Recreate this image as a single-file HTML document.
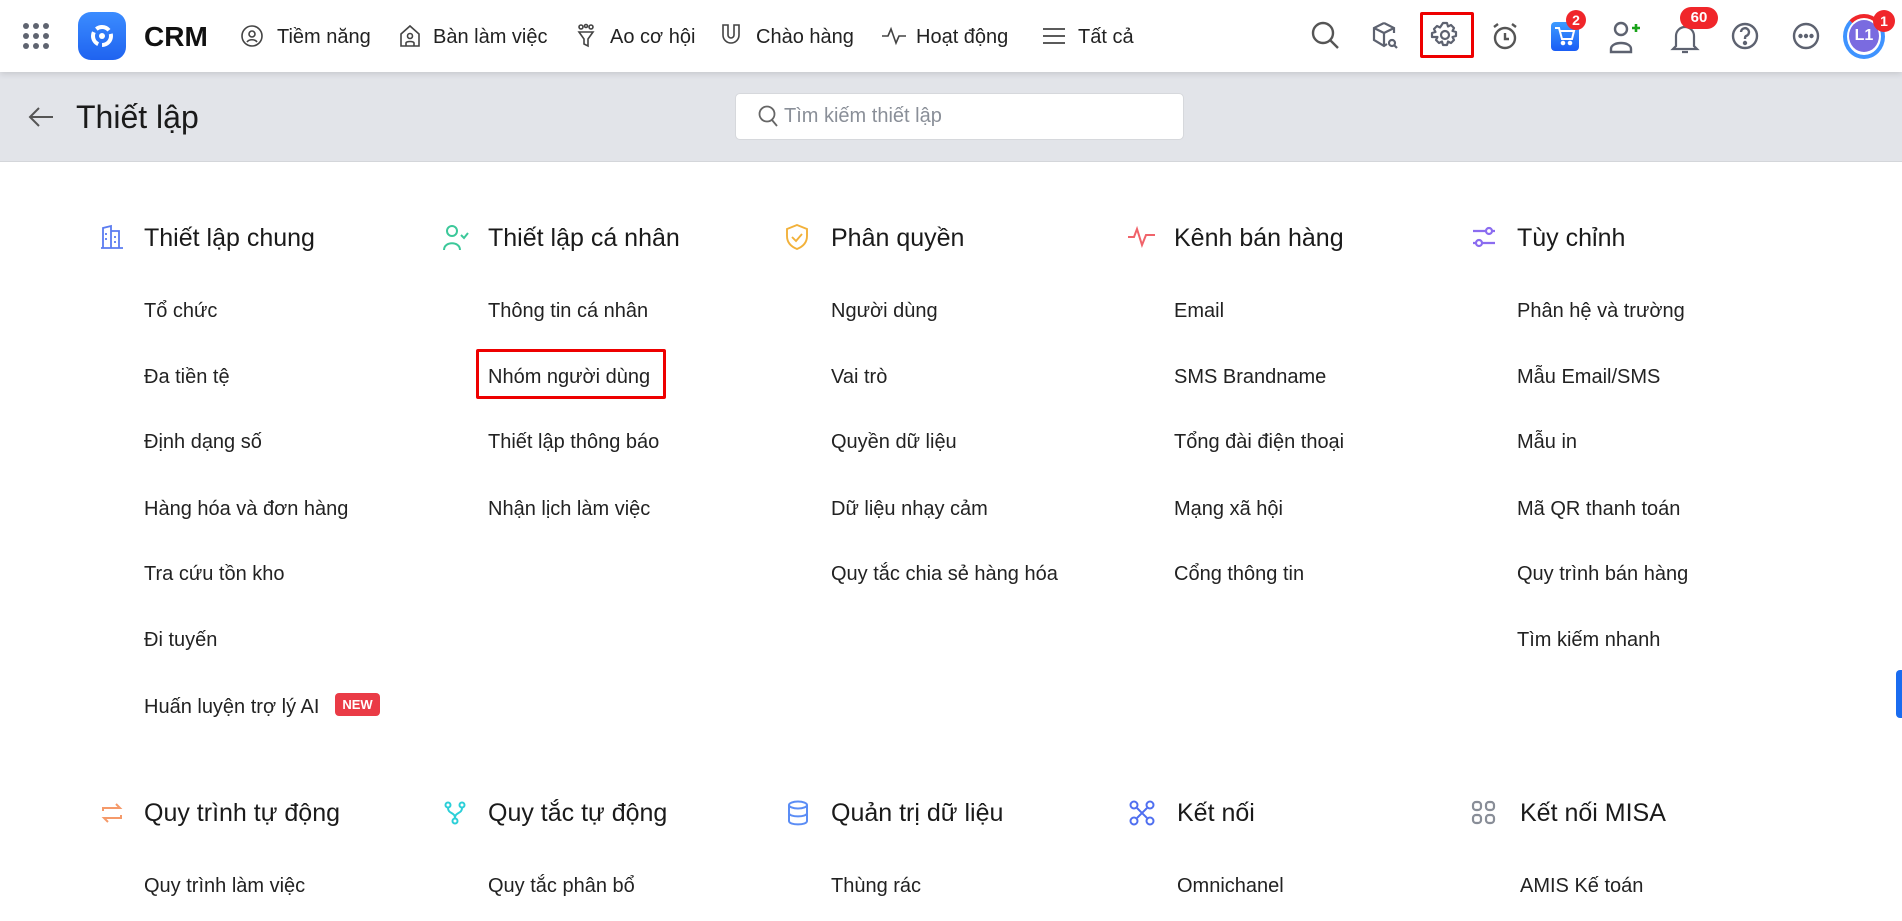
<!DOCTYPE html>
<html><head><meta charset="utf-8"><style>
*{margin:0;padding:0;box-sizing:border-box}
body{width:1902px;height:921px;overflow:hidden;background:#fff;font-family:"Liberation Sans","Noto Sans CJK SC",sans-serif;color:#1f1f1f;position:relative}
.a{position:absolute}
.t{position:absolute;line-height:30px;white-space:nowrap}
.nav{font-size:20px;color:#222}
.h{font-size:25px;color:#1a1a1a}
.i{font-size:20px;color:#222}
svg{position:absolute;overflow:visible}
</style></head><body>
<div class="a" style="left:0;top:0;width:1902px;height:72px;background:#fff;box-shadow:0 2px 6px rgba(0,0,0,.12);z-index:2"></div>
<div class="a" style="left:0;top:72px;width:1902px;height:90px;background:#e2e4e9;border-bottom:1px solid #d4d6da"></div>
<div style="position:absolute;left:0;top:0;z-index:3;width:1902px;height:72px">
<svg style="left:22px;top:22px" width="28" height="28"><g fill="#5f6470"><circle cx="4" cy="4" r="3"/><circle cx="14" cy="4" r="3"/><circle cx="24" cy="4" r="3"/><circle cx="4" cy="14" r="3"/><circle cx="14" cy="14" r="3"/><circle cx="24" cy="14" r="3"/><circle cx="4" cy="24" r="3"/><circle cx="14" cy="24" r="3"/><circle cx="24" cy="24" r="3"/></g></svg>
<div class="a" style="left:78px;top:12px;width:48px;height:48px;border-radius:13px;background:linear-gradient(#3b8cff,#1f63f0)"></div>
<svg style="left:90px;top:24px" width="24" height="24"><circle cx="12" cy="12" r="9" fill="none" stroke="#fff" stroke-width="4" stroke-dasharray="14 4"/><circle cx="12" cy="12" r="3" fill="#fff"/></svg>
<div class="t" style="left:144px;top:22px;font-size:28px;font-weight:bold;color:#111">CRM</div>
<svg style="left:241px;top:25px" width="22" height="22" fill="none" stroke="#444" stroke-width="1.6"><circle cx="11" cy="11" r="10"/><circle cx="11" cy="9" r="3"/><path d="M6 17c2-3 8-3 10 0"/></svg>
<div class="t nav" style="left:277px;top:22px">Tiềm năng</div>
<svg style="left:399px;top:24px" width="22" height="24" fill="none" stroke="#444" stroke-width="1.6"><path d="M2 10 11 2l9 8v12H2z"/><circle cx="11" cy="12" r="2.5"/><path d="M7 22v-3c0-2 8-2 8 0v3"/></svg>
<div class="t nav" style="left:433px;top:22px">Bàn làm việc</div>
<svg style="left:576px;top:24px" width="20" height="24" fill="none" stroke="#444" stroke-width="1.6"><circle cx="5" cy="3" r="2"/><circle cx="10" cy="2" r="1.5"/><circle cx="15" cy="3" r="2"/><path d="M3 8h14l-5 7v7l-4-2v-5z"/></svg>
<div class="t nav" style="left:610px;top:22px">Ao cơ hội</div>
<svg style="left:720px;top:23px" width="22" height="24" fill="none" stroke="#444" stroke-width="1.6"><path d="M3 2v10a8 8 0 0 0 16 0V2h-5v10a3 3 0 0 1-6 0V2z"/></svg>
<div class="t nav" style="left:756px;top:22px">Chào hàng</div>
<svg style="left:882px;top:27px" width="24" height="18" fill="none" stroke="#444" stroke-width="1.6"><path d="M0 9h6l3-7 5 14 3-7h7"/></svg>
<div class="t nav" style="left:916px;top:22px">Hoạt động</div>
<svg style="left:1043px;top:28px" width="22" height="16" stroke="#444" stroke-width="1.8"><path d="M0 1h22M0 8h22M0 15h22"/></svg>
<div class="t nav" style="left:1078px;top:22px">Tất cả</div>

<svg style="left:1311px;top:21px" width="30" height="30" fill="none" stroke="#555" stroke-width="2.4"><circle cx="12" cy="12" r="10"/><path d="M19 19l8 8"/></svg>
<svg style="left:1371px;top:21px" width="28" height="30" fill="none" stroke="#5d6270" stroke-width="2.2"><path d="M13 2 3 7v12l10 6 3-2M13 2l10 5v5M3 7l10 5 10-5M13 12v12"/><circle cx="21" cy="22" r="3"/><path d="M23 24l3 3"/></svg>
<div class="a" style="left:1420px;top:12px;width:54px;height:46px;border:3px solid #e00;border-radius:2px"></div>
<svg style="left:1431px;top:21px" width="28" height="30" fill="none" stroke="#5d6270" stroke-width="2.2" stroke-linejoin="round"><path d="M12 2h4l1 3.5 3-1.5 3 3-1.5 3 3.5 1v4l-3.5 1 1.5 3-3 3-3-1.5-1 3.5h-4l-1-3.5-3 1.5-3-3 1.5-3L1 16v-4l3.5-1L3 8l3-3 3 1.5z"/><circle cx="14" cy="14" r="4"/></svg>
<svg style="left:1491px;top:22px" width="28" height="30" fill="none" stroke="#555" stroke-width="2.4"><circle cx="14" cy="16" r="10"/><path d="M14 11v6h4M3 5l4-3M25 5l-4-3"/></svg>
<div class="a" style="left:1551px;top:22px;width:28px;height:29px;border-radius:4px;background:linear-gradient(#3d9bff,#1a5df5)"></div>
<svg style="left:1553px;top:26px" width="24" height="22" fill="none" stroke="#fff" stroke-width="2"><path d="M2 2h4l3 11h10l2-8H7"/><circle cx="10" cy="17" r="1.3" fill="#fff"/><circle cx="17" cy="17" r="1.3" fill="#fff"/></svg>
<div class="a" style="left:1566px;top:10px;width:20px;height:20px;border-radius:50%;background:#f0262a;color:#fff;font-weight:bold;font-size:14px;text-align:center;line-height:20px">2</div>
<svg style="left:1609px;top:20px" width="34" height="34" fill="none" stroke="#5d6270" stroke-width="2.4"><circle cx="12" cy="9" r="6"/><path d="M2 32v-3c0-8 20-8 20 0v3z"/><path d="M27 4v8M23 8h8" stroke="#1aa31a" stroke-width="2.6"/></svg>
<svg style="left:1671px;top:24px" width="28" height="32" fill="none" stroke="#5d6270" stroke-width="2.2"><path d="M5 22V12a9 9 0 0 1 18 0v10l3 3H2z M11 28h6"/></svg>
<div class="a" style="left:1680px;top:7px;width:38px;height:22px;border-radius:11px;background:#f0262a;color:#fff;font-weight:bold;font-size:15px;text-align:center;line-height:22px">60</div>
<svg style="left:1731px;top:21px" width="30" height="30" fill="none" stroke="#5d6270" stroke-width="2.4"><circle cx="14" cy="15" r="12"/><path d="M10 11a4 4 0 1 1 5 4c-1 .5-1 1.5-1 3"/><circle cx="14" cy="22" r="1" fill="#5d6270"/></svg>
<svg style="left:1791px;top:21px" width="30" height="30" fill="none" stroke="#5d6270" stroke-width="2.4"><circle cx="15" cy="15" r="12"/><circle cx="9.5" cy="15" r="1" fill="#5d6270"/><circle cx="15" cy="15" r="1" fill="#5d6270"/><circle cx="20.5" cy="15" r="1" fill="#5d6270"/></svg>
<div class="a" style="left:1843px;top:14px;width:42px;height:45px;border-radius:50%;border:4px solid #3e93ff;border-top-color:#f0262a;border-left-color:#3e93ff"></div>
<div class="a" style="left:1849px;top:20px;width:30px;height:32px;border-radius:50%;background:#7a6be0;color:#fff;font-weight:bold;font-size:16px;text-align:center;line-height:32px">L1</div>
<div class="a" style="left:1873px;top:10px;width:22px;height:22px;border-radius:50%;background:#f0262a;color:#fff;font-weight:bold;font-size:14px;text-align:center;line-height:22px">1</div>
</div>

<svg style="left:28px;top:106px" width="26" height="22" fill="none" stroke="#555" stroke-width="2"><path d="M25 11H2M11 2 2 11l9 9"/></svg>
<div class="t" style="left:76px;top:101px;font-size:32px;line-height:32px;color:#1a1a1a">Thiết lập</div>
<div class="a" style="left:735px;top:93px;width:449px;height:47px;background:#fff;border:1px solid #d6d8dc;border-radius:5px"></div>
<svg style="left:758px;top:105px" width="22" height="24" fill="none" stroke="#666" stroke-width="1.8"><circle cx="9" cy="9" r="7.5"/><path d="M14 15l5 6"/></svg>
<div class="t" style="left:784px;top:101px;font-size:20px;color:#8a8f98">Tìm kiếm thiết lập</div>

<svg style="left:100px;top:225px" width="24" height="24" fill="none" stroke="#5b7cf0" stroke-width="1.8"><path d="M1 23h22M3 23V3l8-2v22M11 6h8v17M6 8v2M6 13v2M15 11v2M15 16v2"/></svg>
<svg style="left:443px;top:225px" width="26" height="26" fill="none" stroke="#3cc89a" stroke-width="2"><circle cx="9" cy="6" r="5"/><path d="M1 25c0-9 16-9 16 0M18 10l3 3 4-5"/></svg>
<svg style="left:785px;top:224px" width="24" height="26" fill="none" stroke="#f2b13a" stroke-width="1.9"><path d="M12 1 2 5v7c0 7 5 11 10 13 5-2 10-6 10-13V5z"/><path d="M7 13l4 4 6-7"/></svg>
<svg style="left:1128px;top:227px" width="28" height="20" fill="none" stroke="#f0636a" stroke-width="2"><path d="M0 10h6l3-8 5 16 4-10h9"/></svg>
<svg style="left:1472px;top:225px" width="24" height="24" fill="none" stroke="#8b6cf0" stroke-width="2.2"><path d="M1 6h14M20 6h3M1 18h4M10 18h13"/><circle cx="17" cy="6" r="3"/><circle cx="7" cy="18" r="3"/></svg>
<div class="t h" style="left:144px;top:223px">Thiết lập chung</div>
<div class="t h" style="left:488px;top:223px">Thiết lập cá nhân</div>
<div class="t h" style="left:831px;top:223px">Phân quyền</div>
<div class="t h" style="left:1174px;top:223px">Kênh bán hàng</div>
<div class="t h" style="left:1517px;top:223px">Tùy chỉnh</div>

<div class="t i" style="left:144px;top:296px">Tổ chức</div>
<div class="t i" style="left:144px;top:362px">Đa tiền tệ</div>
<div class="t i" style="left:144px;top:427px">Định dạng số</div>
<div class="t i" style="left:144px;top:494px">Hàng hóa và đơn hàng</div>
<div class="t i" style="left:144px;top:559px">Tra cứu tồn kho</div>
<div class="t i" style="left:144px;top:625px">Đi tuyến</div>
<div class="t i" style="left:144px;top:692px">Huấn luyện trợ lý AI</div>
<div class="a" style="left:335px;top:693px;width:45px;height:23px;background:#ea3b46;border-radius:4px;color:#fff;font-size:13px;font-weight:bold;text-align:center;line-height:23px">NEW</div>

<div class="t i" style="left:488px;top:296px">Thông tin cá nhân</div>
<div class="a" style="left:476px;top:349px;width:190px;height:50px;border:3px solid #e00;border-radius:2px"></div>
<div class="t i" style="left:488px;top:362px">Nhóm người dùng</div>
<div class="t i" style="left:488px;top:427px">Thiết lập thông báo</div>
<div class="t i" style="left:488px;top:494px">Nhận lịch làm việc</div>

<div class="t i" style="left:831px;top:296px">Người dùng</div>
<div class="t i" style="left:831px;top:362px">Vai trò</div>
<div class="t i" style="left:831px;top:427px">Quyền dữ liệu</div>
<div class="t i" style="left:831px;top:494px">Dữ liệu nhạy cảm</div>
<div class="t i" style="left:831px;top:559px">Quy tắc chia sẻ hàng hóa</div>

<div class="t i" style="left:1174px;top:296px">Email</div>
<div class="t i" style="left:1174px;top:362px">SMS Brandname</div>
<div class="t i" style="left:1174px;top:427px">Tổng đài điện thoại</div>
<div class="t i" style="left:1174px;top:494px">Mạng xã hội</div>
<div class="t i" style="left:1174px;top:559px">Cổng thông tin</div>

<div class="t i" style="left:1517px;top:296px">Phân hệ và trường</div>
<div class="t i" style="left:1517px;top:362px">Mẫu Email/SMS</div>
<div class="t i" style="left:1517px;top:427px">Mẫu in</div>
<div class="t i" style="left:1517px;top:494px">Mã QR thanh toán</div>
<div class="t i" style="left:1517px;top:559px">Quy trình bán hàng</div>
<div class="t i" style="left:1517px;top:625px">Tìm kiếm nhanh</div>

<div class="a" style="left:1896px;top:670px;width:8px;height:48px;background:#1a6cf0;border-radius:4px 0 0 4px"></div>

<svg style="left:100px;top:801px" width="24" height="24" fill="none" stroke="#f59a6a" stroke-width="2"><path d="M3 10V7h17l-4-4M21 14v3H4l4 4"/></svg>
<svg style="left:443px;top:801px" width="24" height="24" fill="none" stroke="#2ccfd8" stroke-width="2"><circle cx="5" cy="4" r="2.5"/><circle cx="19" cy="4" r="2.5"/><circle cx="12" cy="20" r="2.5"/><path d="M5 7c0 6 7 4 7 10M19 7c0 6-7 4-7 10"/></svg>
<svg style="left:787px;top:800px" width="22" height="26" fill="none" stroke="#5b8df5" stroke-width="2"><ellipse cx="11" cy="5" rx="9" ry="3.5"/><path d="M2 5v16c0 4.5 18 4.5 18 0V5M2 13c0 4.5 18 4.5 18 0"/></svg>
<svg style="left:1129px;top:800px" width="26" height="26" fill="none" stroke="#4f6ff0" stroke-width="2"><circle cx="5" cy="5" r="3.5"/><circle cx="21" cy="5" r="3.5"/><circle cx="5" cy="21" r="3.5"/><circle cx="21" cy="21" r="3.5"/><path d="M8 8l10 10M18 8 8 18"/></svg>
<svg style="left:1472px;top:801px" width="24" height="24" fill="none" stroke="#888d97" stroke-width="2.2"><rect x="1" y="1" width="8" height="8" rx="3"/><rect x="14" y="1" width="8" height="8" rx="3"/><rect x="1" y="14" width="8" height="8" rx="3"/><rect x="14" y="14" width="8" height="8" rx="3"/></svg>
<div class="t h" style="left:144px;top:798px">Quy trình tự động</div>
<div class="t h" style="left:488px;top:798px">Quy tắc tự động</div>
<div class="t h" style="left:831px;top:798px">Quản trị dữ liệu</div>
<div class="t h" style="left:1177px;top:798px">Kết nối</div>
<div class="t h" style="left:1520px;top:798px">Kết nối MISA</div>

<div class="t i" style="left:144px;top:871px">Quy trình làm việc</div>
<div class="t i" style="left:488px;top:871px">Quy tắc phân bổ</div>
<div class="t i" style="left:831px;top:871px">Thùng rác</div>
<div class="t i" style="left:1177px;top:871px">Omnichanel</div>
<div class="t i" style="left:1520px;top:871px">AMIS Kế toán</div>
</body></html>
